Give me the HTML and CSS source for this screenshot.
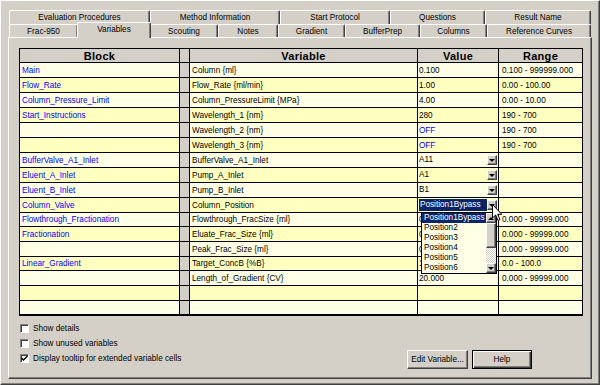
FILE: index.html
```html
<!DOCTYPE html>
<html>
<head>
<meta charset="utf-8">
<link rel="stylesheet" href="styles.css">
</head>
<body>
<div class="window">
  <div class="tabrow back">
    <div class="tab t-eval">Evaluation Procedures</div>
    <div class="tab t-method">Method Information</div>
    <div class="tab t-start">Start Protocol</div>
    <div class="tab t-quest">Questions</div>
    <div class="tab t-result">Result Name</div>
  </div>
  <div class="tabrow front">
    <div class="tab t-frac">Frac-950</div>
    <div class="tab t-vars sel">Variables</div>
    <div class="tab t-scout">Scouting</div>
    <div class="tab t-notes">Notes</div>
    <div class="tab t-grad">Gradient</div>
    <div class="tab t-buf">BufferPrep</div>
    <div class="tab t-cols">Columns</div>
    <div class="tab t-ref">Reference Curves</div>
  </div>
  <div class="panel">
    <div class="table">
      <div class="row hdr"><div>Block</div><div class="nar"></div><div>Variable</div><div>Value</div><div>Range</div></div>
      <div class="row light"><div class="blk">Main</div><div class="nar"></div><div>Column {ml}</div><div class="val">0.100</div><div>0.100 - 999999.000</div></div>
      <div class="row yel"><div class="blk">Flow_Rate</div><div class="nar"></div><div>Flow_Rate {ml/min}</div><div class="val">1.00</div><div>0.00 - 100.00</div></div>
      <div class="row light"><div class="blk">Column_Pressure_Limit</div><div class="nar"></div><div>Column_PressureLimit {MPa}</div><div class="val">4.00</div><div>0.00 - 10.00</div></div>
      <div class="row yel"><div class="blk">Start_Instructions</div><div class="nar"></div><div>Wavelength_1 {nm}</div><div class="val">280</div><div>190 - 700</div></div>
      <div class="row light"><div class="blk"></div><div class="nar"></div><div>Wavelength_2 {nm}</div><div class="val off">OFF</div><div>190 - 700</div></div>
      <div class="row yel"><div class="blk"></div><div class="nar"></div><div>Wavelength_3 {nm}</div><div class="val off">OFF</div><div>190 - 700</div></div>
      <div class="row light"><div class="blk">BufferValve_A1_Inlet</div><div class="nar"></div><div>BufferValve_A1_Inlet</div><div class="val combo"><span class="ctext">A11</span><span class="ddbtn"></span></div><div></div></div>
      <div class="row yel"><div class="blk">Eluent_A_Inlet</div><div class="nar"></div><div>Pump_A_Inlet</div><div class="val combo"><span class="ctext">A1</span><span class="ddbtn"></span></div><div></div></div>
      <div class="row light"><div class="blk">Eluent_B_Inlet</div><div class="nar"></div><div>Pump_B_Inlet</div><div class="val combo"><span class="ctext">B1</span><span class="ddbtn"></span></div><div></div></div>
      <div class="row yel"><div class="blk">Column_Valve</div><div class="nar"></div><div>Column_Position</div><div class="val combo open"><span class="ctext chosen">Position1Bypass</span><span class="ddbtn"></span>
        <div class="ddlist">
          <div class="items">
            <div class="item hl">Position1Bypass</div>
            <div class="item">Position2</div>
            <div class="item">Position3</div>
            <div class="item">Position4</div>
            <div class="item">Position5</div>
            <div class="item">Position6</div>
          </div>
          <div class="sb">
            <div class="sbbtn up"></div>
            <div class="thumb"></div>
            <div class="track"></div>
            <div class="sbbtn down"></div>
          </div>
        </div>
      </div><div></div></div>
      <div class="row light short"><div class="blk">Flowthrough_Fractionation</div><div class="nar"></div><div>Flowthrough_FracSize {ml}</div><div class="val">0.000</div><div>0.000 - 99999.000</div></div>
      <div class="row yel"><div class="blk">Fractionation</div><div class="nar"></div><div>Eluate_Frac_Size {ml}</div><div class="val">0.000</div><div>0.000 - 99999.000</div></div>
      <div class="row light"><div class="blk"></div><div class="nar"></div><div>Peak_Frac_Size {ml}</div><div class="val">0.000</div><div>0.000 - 99999.000</div></div>
      <div class="row yel short"><div class="blk">Linear_Gradient</div><div class="nar"></div><div>Target_ConcB {%B}</div><div class="val">100.0</div><div>0.0 - 100.0</div></div>
      <div class="row light"><div class="blk"></div><div class="nar"></div><div>Length_of_Gradient {CV}</div><div class="val">20.000</div><div>0.000 - 99999.000</div></div>
      <div class="row yel"><div class="blk"></div><div class="nar"></div><div></div><div class="val"></div><div></div></div>
      <div class="row light short"><div class="blk"></div><div class="nar"></div><div></div><div class="val"></div><div></div></div>
      <svg class="cursor" width="11" height="18" viewBox="0 0 11 18"><path d="M0.5 0.5 L0.5 14 L3.6 11 L6 16.5 L8 15.6 L5.7 10.3 L9.8 10.3 Z" fill="#fff" stroke="#000" stroke-width="1"/></svg>
    </div>
    <div class="bottom">
      <div class="checks">
        <div class="check"><span class="box"></span><span class="lbl">Show details</span></div>
        <div class="check"><span class="box"></span><span class="lbl">Show unused variables</span></div>
        <div class="check"><span class="box"><svg width="7" height="7" viewBox="0 0 7 7"><path d="M0.5 3 L2.5 5 L6.5 1" fill="none" stroke="#000" stroke-width="1.4"/></svg></span><span class="lbl">Display tooltip for extended variable cells</span></div>
      </div>
      <div class="buttons">
        <div class="btn b-edit">Edit Variable...</div>
        <div class="btn b-help def">Help</div>
      </div>
    </div>
  </div>
</div>
</body>
</html>
```

FILE: styles.css
```css
* { box-sizing: border-box; }
body {
  margin: 0;
  background: #d4d0c8;
  font-family: "Liberation Sans", Arial, sans-serif;
  font-size: 8.2px;
  color: #000;
}
.window {
  width: 600px;
  height: 385px;
  border: 1px solid;
  border-color: #fff #404040 #404040 #fff;
  box-shadow: inset -1px -1px #808080;
  padding: 9px 0 0 7px;
  overflow: hidden;
}
.tabrow { display: flex; margin-left: 1px; }
.tabrow.back { height: 14px; }
.tabrow.front { height: 13px; }
.tab {
  flex: none;
  background: #d4d0c8;
  border-top: 1px solid #fff;
  border-left: 1px solid #fff;
  border-right: 1px solid #404040;
  box-shadow: inset -1px 0 #808080;
  border-radius: 2px 2px 0 0;
  display: flex;
  align-items: center;
  justify-content: center;
  white-space: nowrap;
}
.tab.sel {
  margin: -2px -1px -1px;
  position: relative;
  z-index: 2;
  padding-bottom: 2px;
}
.t-eval { width: 141px; }
.t-method { width: 130px; }
.t-start { width: 110px; }
.t-quest { width: 95px; }
.t-result { width: 106px; }
.t-frac { width: 69px; }
.t-vars { width: 74px; }
.t-scout { width: 68px; }
.t-notes { width: 60px; }
.t-grad { width: 67px; }
.t-buf { width: 75px; }
.t-cols { width: 67px; }
.t-ref { width: 104px; }

.panel {
  width: 584px;
  height: 342px;
  border-top: 1px solid #fff;
  border-left: 1px solid #fff;
  border-right: 1px solid #404040;
  border-bottom: 1px solid #404040;
  box-shadow: inset -1px -1px #808080;
  padding: 10px 0 0 10px;
}
.table {
  width: 564px;
  border: 1px solid #000;
  position: relative;
}
.row {
  display: grid;
  grid-template-columns: 160px 10px 228px 81px 83px;
  height: 15px;
}
.row.short { height: 14px; }
.row > div {
  border-right: 1px solid #000;
  border-bottom: 1px solid #000;
  overflow: hidden;
  white-space: nowrap;
  padding-left: 2px;
  line-height: 15px;
}
.row.short > div { line-height: 14px; }
.row > div:last-child { border-right: 0; padding-left: 3px; }
.row:last-child > div { border-bottom: 0; }
.row.hdr { height: 14px; background: #d4d0c8; }
.row.hdr > div {
  font-weight: bold;
  font-size: 11px;
  letter-spacing: 0.3px;
  text-align: center;
  line-height: 14px;
  padding-left: 0;
}
.row.hdr > div:last-child { padding-left: 0; }
.light { background: #ffffe6; }
.yel { background: #ffffc0; }
.row > .nar { background: #d4d0c8; padding: 0; }
.blk { color: #0000ff; }
.row > .val { padding-left: 1px; }
.off { color: #0000ff; }
.row > .combo {
  display: flex;
  align-items: center;
  padding-right: 1px;
}
.ctext { flex: 1; line-height: 12px; overflow: hidden; }
.ctext.chosen { background: #0a246a; color: #fff; padding-left: 1px; margin-right: 0; }
.row > .combo.open { overflow: visible; position: relative; }
.ddbtn {
  flex: none;
  width: 10px;
  height: 10px;
  background: #d4d0c8;
  border: 1px solid;
  border-color: #fff #404040 #404040 #fff;
  box-shadow: inset -1px -1px #808080;
  display: flex;
  align-items: center;
  justify-content: center;
}
.ddbtn::after {
  content: "";
  border-left: 3px solid transparent;
  border-right: 3px solid transparent;
  border-top: 3px solid #000;
  margin-top: 1px;
}
.ddlist {
  position: absolute;
  left: 3px;
  top: 100%;
  width: 76px;
  height: 62px;
  border: 1px solid #000;
  background: #ffffe6;
  display: flex;
  z-index: 5;
}
.items { width: 64px; }
.item { height: 10px; line-height: 10px; padding-left: 2px; color: #000; }
.item.hl { background: #0a246a; color: #fff; }
.sb { width: 10px; display: flex; flex-direction: column; }
.sbbtn {
  height: 10px;
  background: #d4d0c8;
  border: 1px solid;
  border-color: #fff #404040 #404040 #fff;
  box-shadow: inset -1px -1px #808080;
  display: flex;
  align-items: center;
  justify-content: center;
}
.sbbtn::after {
  content: "";
  border-left: 3px solid transparent;
  border-right: 3px solid transparent;
}
.sbbtn.up::after { border-bottom: 3px solid #000; }
.sbbtn.down::after { border-top: 3px solid #000; }
.thumb {
  height: 25px;
  background: #d4d0c8;
  border: 1px solid;
  border-color: #fff #404040 #404040 #fff;
  box-shadow: inset -1px -1px #808080;
}
.track {
  flex: 1;
  background: conic-gradient(#fff 25%, #d4d0c8 0 50%, #fff 0 75%, #d4d0c8 0);
  background-size: 2px 2px;
}
.cursor { position: absolute; left: 472px; top: 155px; z-index: 10; }

.bottom {
  display: flex;
  align-items: flex-end;
  margin-top: 8px;
}
.checks { margin-left: 1px; }
.check { display: flex; align-items: flex-start; height: 15px; }
.box {
  width: 9px;
  height: 9px;
  background: #fff;
  border: 1px solid;
  border-color: #808080 #fff #fff #808080;
  box-shadow: inset 1px 1px #404040;
  display: flex;
  align-items: center;
  justify-content: center;
}
.lbl { margin-left: 4px; line-height: 10px; }
.buttons { margin-left: auto; margin-right: 59px; display: flex; gap: 4px; }
.btn {
  height: 19px;
  background: #d4d0c8;
  border: 1px solid;
  border-color: #fff #404040 #404040 #fff;
  box-shadow: inset -1px -1px #808080;
  display: flex;
  align-items: center;
  justify-content: center;
  white-space: nowrap;
}
.btn.def {
  border-color: #000;
  box-shadow: inset 1px 1px #fff, inset -1px -1px #404040, inset -2px -2px #808080;
}
.b-edit { width: 61px; }
.b-help { width: 60px; }
```
